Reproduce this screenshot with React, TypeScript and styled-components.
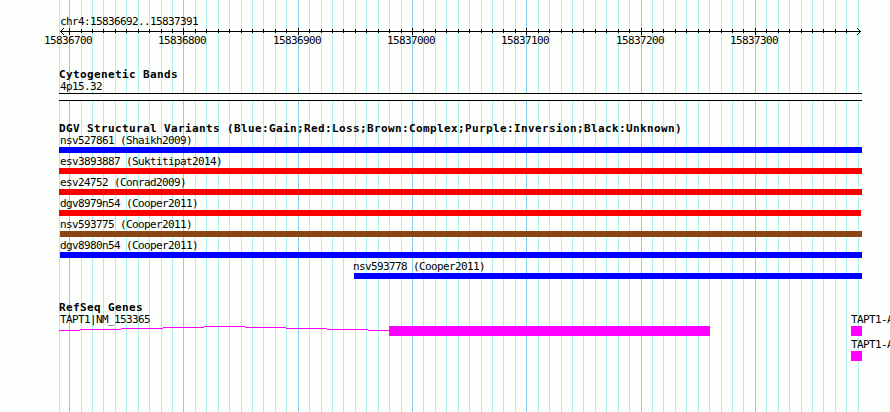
import React from 'react';
import styled, { createGlobalStyle } from 'styled-components';

const GlobalStyle = createGlobalStyle`
  body {
    margin: 0;
    background-color: #fdfffc;
  }
`;

const PANEL_LEFT = 59;
const PANEL_RIGHT = 862;

const Browser = styled.main`
  position: relative;
  width: 890px;
  height: 412px;
  overflow: hidden;
  box-sizing: border-box;
  background-color: #fdfffc;
  color: #000;
  font-family: 'DejaVu Sans Mono', 'Liberation Mono', monospace;
  font-size: 11px;
  letter-spacing: -0.622px;
`;

const GridLines = styled.svg`
  position: absolute;
  inset: 0;
  shape-rendering: crispEdges;
`;

const Content = styled.div`
  position: relative;
  display: flex;
  flex-direction: column;
`;

const Ruler = styled.svg`
  display: block;
  height: 68px;
  flex: none;
`;

const Track = styled.section<{ $height: number }>`
  height: ${props => props.$height}px;
  padding-left: ${PANEL_LEFT}px;
`;

const Heading = styled.h2`
  margin: 0;
  height: 12px;
  line-height: 14px;
  font-size: 11px;
  font-weight: bold;
  letter-spacing: 0.378px;
  white-space: pre;
`;

const Rows = styled.div`
  display: flex;
  flex-direction: column;
  gap: 2px;
`;

const Feature = styled.div<{ $start: number }>`
  display: flex;
  flex-direction: column;
  gap: 1px;
  margin-left: ${props => props.$start - PANEL_LEFT}px;
`;

const Label = styled.span<{ $indent?: number }>`
  height: 12px;
  line-height: 14px;
  text-indent: ${props => props.$indent ?? 0}px;
  white-space: pre;
`;

const Bar = styled.div<{ $width: number; $height: number; $color: string }>`
  width: ${props => props.$width}px;
  height: ${props => props.$height}px;
  background-color: ${props => props.$color};
`;

const Band = styled.div`
  width: ${PANEL_RIGHT - PANEL_LEFT}px;
  height: 8px;
  box-sizing: border-box;
  border: solid #000;
  border-width: 1px 0;
  background-color: #fdfffc;
`;

const GeneRow = styled.div`
  display: flex;
  height: 23px;
`;

const Transcript = styled.div`
  display: flex;
  flex-direction: column;
  gap: 1px;
  width: 792px;
  flex: none;
`;

const Model = styled.div`
  display: flex;
`;

const Intron = styled.svg`
  display: block;
  flex: none;
  shape-rendering: crispEdges;
`;

const gridLines = [
  59, 69, 81, 92, 103, 115, 126, 138, 149, 161, 172, 183, 195, 206, 218, 229, 241, 252, 263, 275,
  286, 298, 309, 321, 332, 343, 355, 366, 378, 389, 401, 412, 423, 435, 446, 458, 469, 481, 492,
  503, 515, 526, 538, 549, 561, 572, 583, 595, 606, 618, 629, 641, 652, 663, 675, 686, 698, 709,
  721, 732, 743, 755, 766, 778, 789, 801, 812, 823, 835, 846, 858,
];

const majorTicks = [
  { x: 69, label: '15836700' },
  { x: 183, label: '15836800' },
  { x: 298, label: '15836900' },
  { x: 412, label: '15837000' },
  { x: 526, label: '15837100' },
  { x: 641, label: '15837200' },
  { x: 755, label: '15837300' },
];

const isMajor = (x: number) => majorTicks.some(tick => tick.x === x);

const variants = [
  { name: 'nsv527861 (Shaikh2009)', start: 59, end: 862, indent: 1, color: '#0000ff' },
  { name: 'esv3893887 (Suktitipat2014)', start: 59, end: 862, indent: 1, color: '#ff0000' },
  { name: 'esv24752 (Conrad2009)', start: 59, end: 862, indent: 1, color: '#ff0000' },
  { name: 'dgv8979n54 (Cooper2011)', start: 59, end: 861, indent: 1, color: '#ff0000' },
  { name: 'nsv593775 (Cooper2011)', start: 60, end: 862, indent: 0, color: '#8b4513' },
  { name: 'dgv8980n54 (Cooper2011)', start: 60, end: 862, indent: 0, color: '#0000ff' },
  { name: 'nsv593778 (Cooper2011)', start: 354, end: 862, indent: -1, color: '#0000ff' },
];

// stepped intron, [from, to, y] relative to the gene model
const intronSteps = [
  [0, 21, 4],
  [21, 62, 3],
  [62, 104, 2],
  [104, 145, 1],
  [145, 186, 0],
  [186, 227, 1],
  [227, 268, 2],
  [268, 309, 3],
  [309, 330, 4],
];

const App: React.FC = () => {
  return (
    <Browser>
      <GlobalStyle />
      <GridLines width="890" height="412">
        {gridLines.map(x => (
          <rect key={x} x={x} y="0" width="1" height="412" fill={isMajor(x) ? '#87ceeb' : '#afeeee'} />
        ))}
      </GridLines>
      <Content>
        <Ruler width="890" height="68">
          <text x="60" y="25">
            chr4:15836692..15837391
          </text>
          <g shapeRendering="crispEdges">
            <rect x="60" y="31" width="801" height="1" />
            {gridLines.slice(1, -1).map(x => (
              <rect key={x} x={x} y={isMajor(x) ? 28 : 29} width="1" height={isMajor(x) ? 7 : 4} />
            ))}
            {[1, 2, 3].map(d => (
              <g key={d}>
                <rect x={60 + d} y={31 - d} width="1" height="1" />
                <rect x={60 + d} y={31 + d} width="1" height="1" />
                <rect x={860 - d} y={31 - d} width="1" height="1" />
                <rect x={860 - d} y={31 + d} width="1" height="1" />
              </g>
            ))}
          </g>
          {majorTicks.map(tick => (
            <text key={tick.label} x={tick.x - 25} y="44">
              {tick.label}
            </text>
          ))}
        </Ruler>

        <Track $height={54}>
          <Heading>Cytogenetic Bands</Heading>
          <Feature $start={59}>
            <Label $indent={1}>4p15.32</Label>
            <Band />
          </Feature>
        </Track>

        <Track $height={179}>
          <Heading>DGV Structural Variants (Blue:Gain;Red:Loss;Brown:Complex;Purple:Inversion;Black:Unknown)</Heading>
          <Rows>
            {variants.map(v => (
              <Feature key={v.name} $start={v.start}>
                <Label $indent={v.indent}>{v.name}</Label>
                <Bar $width={v.end - v.start} $height={6} $color={v.color} />
              </Feature>
            ))}
          </Rows>
        </Track>

        <Track $height={111}>
          <Heading>RefSeq Genes</Heading>
          <Rows>
            <GeneRow>
              <Transcript>
                <Label $indent={1}>TAPT1|NM_153365</Label>
                <Model>
                  <Intron width="330" height="10">
                    {intronSteps.map(([from, to, y]) => (
                      <rect key={from} x={from} y={y} width={to - from} height="1" fill="#ff00ff" />
                    ))}
                  </Intron>
                  <Bar $width={321} $height={10} $color="#ff00ff" />
                </Model>
              </Transcript>
              <Feature $start={59}>
                <Label>TAPT1-A</Label>
                <Bar $width={11} $height={10} $color="#ff00ff" />
              </Feature>
            </GeneRow>
            <Feature $start={851}>
              <Label>TAPT1-A</Label>
              <Bar $width={11} $height={10} $color="#ff00ff" />
            </Feature>
          </Rows>
        </Track>
      </Content>
    </Browser>
  );
};

export default App;
